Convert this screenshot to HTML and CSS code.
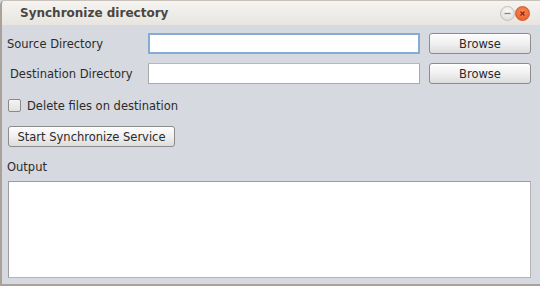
FILE: index.html
```html
<!DOCTYPE html>
<html lang="en">

<head>
  <meta charset="utf-8">
  <title>Synchronize directory</title>
  <link rel="stylesheet" href="styles.css">
</head>

<body>
  <div class="window">
    <div class="titlebar">
      <span class="title">Synchronize directory</span>
      <div class="controls">
        <span class="ctl minimize">
          <svg width="15" height="15" viewBox="0 0 15 15"><path d="M4.5 7.5h6" stroke="#8a8782" stroke-width="1.4" /></svg>
        </span>
        <span class="ctl close">
          <svg width="15" height="15" viewBox="0 0 15 15"><path d="M5.5 5.5l4 4M9.5 5.5l-4 4" stroke="#8c2f10" stroke-width="1.4" /></svg>
        </span>
      </div>
    </div>

    <div class="content">
      <div class="row">
        <label class="label">Source Directory</label>
        <input type="text" class="field focused">
        <button class="button browse">Browse</button>
      </div>
      <div class="row">
        <label class="label indent">Destination Directory</label>
        <input type="text" class="field">
        <button class="button browse">Browse</button>
      </div>

      <div class="check-row">
        <span class="checkbox"></span>
        <span>Delete files on destination</span>
      </div>

      <div class="start-row">
        <button class="button start">Start Synchronize Service</button>
      </div>

      <div class="output-label">Output</div>
      <div class="output"></div>
    </div>
  </div>
</body>

</html>
```

FILE: styles.css
```css
* {
  margin: 0;
  padding: 0;
  box-sizing: border-box;
}

body {
  width: 540px;
  height: 286px;
  overflow: hidden;
  font-family: 'DejaVu Sans', 'Liberation Sans', sans-serif;
  font-size: 11.5px;
  color: #2b2b2b;
  background: #d6d9df;
}

.window {
  height: 286px;
  display: flex;
  flex-direction: column;
  border-left: 2px solid #aaa299;
  border-bottom: 2px solid #aaa299;
  border-top-left-radius: 5px;
  overflow: hidden;
}

.titlebar {
  height: 25px;
  display: flex;
  align-items: center;
  padding: 0 10px 0 18px;
  background: linear-gradient(to bottom, #f5f4f1, #e8e5e0);
  border-top: 1px solid #c8c2ba;
}

.title {
  flex: 1;
  font-weight: bold;
  font-size: 12px;
  color: #4a4641;
}

.controls {
  display: flex;
  gap: 0;
}

.ctl {
  width: 15px;
  height: 15px;
  border-radius: 50%;
  display: flex;
}

.minimize {
  background: radial-gradient(circle at 50% 35%, #fbfbfa, #d9d6d1);
  border: 1px solid #c4bfb8;
}

.close {
  background: radial-gradient(circle at 50% 35%, #f9895a, #e8561f);
  border: 1px solid #d0592a;
}

.ctl svg {
  margin: -1px;
}

.content {
  flex: 1;
  display: flex;
  flex-direction: column;
  padding: 8px 9px 0 5px;
}

.row {
  display: flex;
  align-items: center;
  height: 21px;
  margin-bottom: 9px;
}

.label {
  width: 141px;
}

.label.indent {
  padding-left: 3px;
}

.field {
  width: 272px;
  height: 21px;
  border: 1px solid #a9a9a9;
  border-top-color: #b8b8b8;
  background: #fff;
  outline: none;
}

.field.focused {
  border: 2px solid #86acd6;
}

.button {
  font-family: 'DejaVu Sans', 'Liberation Sans', sans-serif;
  font-size: 11.5px;
  color: #2b2b2b;
  height: 21px;
  border: 1px solid #8c8c8c;
  border-radius: 3px;
  background: linear-gradient(to bottom, #fdfdfd, #f0f0f0 50%, #dcdcdc);
  box-shadow: inset 0 1px 0 #fff;
}

.browse {
  width: 102px;
  margin-left: 9px;
}

.check-row {
  display: flex;
  align-items: center;
  gap: 6px;
  margin-top: 5px;
  padding-left: 1px;
  height: 15px;
}

.checkbox {
  width: 13px;
  height: 13px;
  border: 1px solid #8a8a8a;
  border-radius: 2px;
  background: linear-gradient(to bottom, #f4f4f4, #e2e2e2);
}

.start-row {
  display: flex;
  margin-top: 13px;
  padding-left: 1px;
}

.start {
  width: 167px;
}

.output-label {
  margin-top: 12px;
  height: 16px;
  line-height: 16px;
}

.output {
  margin: 6px 0 0 1px;
  height: 97px;
  background: #fff;
  border: 1px solid #9c9c9c;
  border-right-color: #b4b4b4;
  border-bottom-color: #b4b4b4;
}
```
